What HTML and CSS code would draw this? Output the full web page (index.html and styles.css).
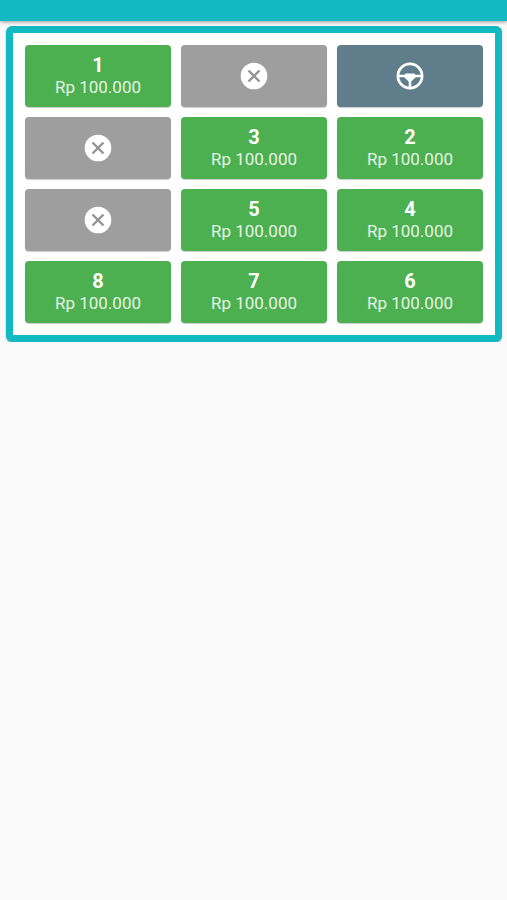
FILE: index.html
```html
<!DOCTYPE html>
<html lang="id">
<head>
<meta charset="utf-8">
<meta name="viewport" content="width=device-width, initial-scale=1">
<link rel="stylesheet" href="styles.css">
</head>
<body>
<svg class="sprite" aria-hidden="true">
  <symbol id="taken" viewBox="0 0 28 28">
    <circle cx="14" cy="14" r="13.3" fill="#fff"/>
    <path d="M8.5 8.5l11 11M19.5 8.5l-11 11" fill="none" stroke="#949494" stroke-width="2.4"/>
  </symbol>
  <symbol id="wheel" viewBox="0 0 28 28">
    <circle cx="14" cy="14" r="12.1" fill="none" stroke="#fff" stroke-width="2.7"/>
    <path d="M2 12.8h6.5l1.2-1.3h8.6l1.2 1.3H26v2.4h-6.2l-4.5 4.4V26h-2.6v-6.4l-4.5-4.4H2z" fill="#fff"/>
  </symbol>
</svg>
<header class="app-bar"></header>
<main class="seat-map">
  <button class="seat"><span class="number">1</span><span class="price">Rp 100.000</span></button>
  <button class="seat taken"><svg class="icon"><use href="#taken"/></svg></button>
  <button class="seat driver"><svg class="icon"><use href="#wheel"/></svg></button>
  <button class="seat taken"><svg class="icon"><use href="#taken"/></svg></button>
  <button class="seat"><span class="number">3</span><span class="price">Rp 100.000</span></button>
  <button class="seat"><span class="number">2</span><span class="price">Rp 100.000</span></button>
  <button class="seat taken"><svg class="icon"><use href="#taken"/></svg></button>
  <button class="seat"><span class="number">5</span><span class="price">Rp 100.000</span></button>
  <button class="seat"><span class="number">4</span><span class="price">Rp 100.000</span></button>
  <button class="seat"><span class="number">8</span><span class="price">Rp 100.000</span></button>
  <button class="seat"><span class="number">7</span><span class="price">Rp 100.000</span></button>
  <button class="seat"><span class="number">6</span><span class="price">Rp 100.000</span></button>
</main>
</body>
</html>
```
FILE: styles.css
```css
* {
  box-sizing: border-box;
}

body {
  margin: 0;
  background: #fafafa;
  font-family: Roboto, sans-serif;
}

.sprite {
  display: none;
}

.app-bar {
  height: 21px;
  background: #12b8c2;
  box-shadow: 0 1px 4px rgba(0, 0, 0, 0.4);
}

.seat-map {
  display: grid;
  grid-template-columns: repeat(3, 1fr);
  gap: 10px;
  margin: 5px 5px 0 6px;
  padding: 12px;
  border: 7px solid #12b8c2;
  border-radius: 6px;
  background: #fff;
  box-shadow: 0 1px 2px rgba(0, 0, 0, 0.25);
}

.seat {
  display: flex;
  flex-direction: column;
  align-items: center;
  justify-content: center;
  height: 62px;
  padding: 0;
  border: 0;
  border-radius: 4px;
  background: #4caf50;
  color: #fff;
  font-family: inherit;
  box-shadow: 0 1px 1px rgba(0, 0, 0, 0.2);
}

.taken {
  background: #9e9e9e;
}

.driver {
  background: #607d8b;
}

.number {
  font-size: 20px;
  font-weight: 700;
  line-height: 22px;
}

.price {
  color: #e6f5e7;
  font-size: 17px;
  line-height: 22px;
}

.icon {
  width: 28px;
  height: 28px;
}
```
